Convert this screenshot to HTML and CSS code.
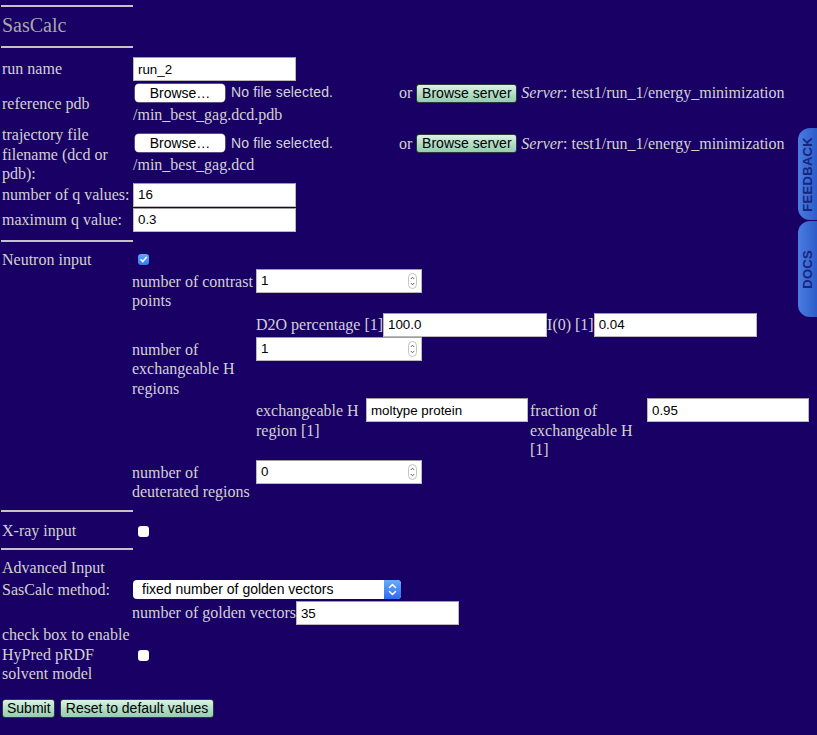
FILE: index.html
```html
<!DOCTYPE html>
<html lang="en">
<head>
<meta charset="utf-8">
<title>SasCalc</title>
<link rel="stylesheet" href="styles.css">
</head>
<body>
<div class="page">
  <div class="rule r1"></div>
  <div class="title">SasCalc</div>
  <div class="rule r2"></div>

  <div class="row row-run">
    <div class="lbl">run name</div>
    <div class="cell"><input class="txt" type="text" value="run_2"></div>
  </div>

  <div class="row row-ref">
    <div class="lbl">reference pdb</div>
    <div class="cell">
      <div class="fileline">
        <span class="filewidget"><button class="btn-white">Browse…</button><span class="nofile">No file selected.</span></span>
        <span class="or">or</span>
        <button class="btn-green">Browse server</button>
        <span class="server"><i>Server</i>: test1/run_1/energy_minimization</span>
      </div>
      <div class="path">/min_best_gag.dcd.pdb</div>
    </div>
  </div>

  <div class="row row-traj">
    <div class="lbl">trajectory file filename (dcd or pdb):</div>
    <div class="cell">
      <div class="fileline">
        <span class="filewidget"><button class="btn-white">Browse…</button><span class="nofile">No file selected.</span></span>
        <span class="or">or</span>
        <button class="btn-green">Browse server</button>
        <span class="server"><i>Server</i>: test1/run_1/energy_minimization</span>
      </div>
      <div class="path">/min_best_gag.dcd</div>
    </div>
  </div>

  <div class="row row-q">
    <div class="lbl">number of q values:</div>
    <div class="cell"><input class="txt" type="text" value="16"></div>
  </div>

  <div class="row row-maxq">
    <div class="lbl">maximum q value:</div>
    <div class="cell"><input class="txt" type="text" value="0.3"></div>
  </div>

  <div class="rule r3"></div>

  <div class="row row-neutron">
    <div class="lbl">Neutron input</div>
    <div class="cell">
      <div class="cbline"><span class="cb on"><svg viewBox="0 0 11 11" width="11" height="11"><path d="M3 5.8 L4.8 7.6 L8.2 3.4" fill="none" stroke="#fff" stroke-width="1.6" stroke-linecap="round" stroke-linejoin="round"/></svg></span></div>
      <div class="nested">
        <div class="nlbl">number of contrast points</div>
        <div class="numbox"><input type="text" value="1"><svg class="spin" viewBox="0 0 9 16" width="9" height="16"><rect x="0.5" y="0.5" width="8" height="15" rx="4" fill="#fff" stroke="#c4c4c4"/><path d="M2.8 6 L4.5 4.2 L6.2 6 M2.8 10 L4.5 11.8 L6.2 10" fill="none" stroke="#555" stroke-width="0.9"/></svg></div>

        <div class="inline">
          <span class="ilbl">D2O percentage [1]</span><input class="txt w164" type="text" value="100.0"><span class="ilbl">I(0) [1]</span><input class="txt" type="text" value="0.04">
        </div>

        <div class="nlbl">number of exchangeable H regions</div>
        <div class="numbox"><input type="text" value="1"><svg class="spin" viewBox="0 0 9 16" width="9" height="16"><rect x="0.5" y="0.5" width="8" height="15" rx="4" fill="#fff" stroke="#c4c4c4"/><path d="M2.8 6 L4.5 4.2 L6.2 6 M2.8 10 L4.5 11.8 L6.2 10" fill="none" stroke="#555" stroke-width="0.9"/></svg></div>

        <div class="subrow">
          <div class="slbl">exchangeable H region [1]</div>
          <input class="txt w162" type="text" value="moltype protein">
          <div class="slbl">fraction of exchangeable H [1]</div>
          <input class="txt w162" type="text" value="0.95">
        </div>

        <div class="nlbl">number of deuterated regions</div>
        <div class="numbox"><input type="text" value="0"><svg class="spin" viewBox="0 0 9 16" width="9" height="16"><rect x="0.5" y="0.5" width="8" height="15" rx="4" fill="#fff" stroke="#c4c4c4"/><path d="M2.8 6 L4.5 4.2 L6.2 6 M2.8 10 L4.5 11.8 L6.2 10" fill="none" stroke="#555" stroke-width="0.9"/></svg></div>
      </div>
    </div>
  </div>

  <div class="rule r4"></div>

  <div class="row row-xray">
    <div class="lbl">X-ray input</div>
    <div class="cell"><span class="cb"></span></div>
  </div>

  <div class="rule r5"></div>

  <div class="adv">Advanced Input</div>

  <div class="row row-method">
    <div class="lbl">SasCalc method:</div>
    <div class="cell">
      <div class="select"><span class="seltext">fixed number of golden vectors</span><span class="selarrow"><svg viewBox="0 0 17 19" width="17" height="19"><path d="M5.5 7.5 L8.5 4.5 L11.5 7.5 M5.5 11.5 L8.5 14.5 L11.5 11.5" fill="none" stroke="#fff" stroke-width="1.5" stroke-linecap="round" stroke-linejoin="round"/></svg></span></div>
    </div>
  </div>

  <div class="row row-golden">
    <div class="cell golden"><span class="ilbl">number of golden vectors</span><input class="txt" type="text" value="35"></div>
  </div>

  <div class="row row-hypred">
    <div class="lbl">check box to enable HyPred pRDF solvent model</div>
    <div class="cell"><span class="cb"></span></div>
  </div>

  <div class="actions">
    <button class="btn-green btn-submit">Submit</button>
    <button class="btn-green btn-reset">Reset to default values</button>
  </div>

  <div class="sidetabs">
    <div class="tab tab-feedback"><span>FEEDBACK</span></div>
    <div class="tab tab-docs"><span>DOCS</span></div>
  </div>
</div>
</body>
</html>
```

FILE: styles.css
```css
html, body {
  margin: 0;
  padding: 0;
}
body {
  background: #190064;
  color: #d2d2d2;
  font-family: "Liberation Serif", "Times New Roman", serif;
  font-size: 16px;
  line-height: 19.5px;
  min-height: 735px;
  overflow: hidden;
}
.page {
  position: relative;
  padding-left: 2px;
  min-height: 735px;
}
.rule {
  width: 132px;
  margin-left: -1px;
  border-top: 2px solid #c4c4c4;
}
.r1 { margin-top: 5px; }
.r2 { margin-top: 9px; }
.r3 { margin-top: 8px; }
.r4 { margin-top: 8px; }
.r5 { margin-top: 8px; }
.title {
  font-size: 20px;
  line-height: 24px;
  color: #a8a8a8;
  margin-top: 6px;
}
.row {
  display: grid;
  grid-template-columns: 131px 1fr;
  align-items: center;
}
.row-run { margin-top: 9px; }
.row-ref { margin-top: 2px; }
.row-q { margin-top: -1px; }
.row-maxq { margin-top: 1px; }
.row-neutron { margin-top: 8px; align-items: start; }
.row-xray { margin-top: 9px; }
.row-method { margin-top: 2px; }
.row-golden { margin-top: 2px; }
.row-golden .cell { grid-column: 2; margin-left: -1px; }
.row-hypred { margin-top: 0; }

.txt {
  box-sizing: border-box;
  display: block;
  width: 163px;
  height: 24px;
  margin: 0;
  padding: 0 4px;
  border: 1px solid #b9b9b9;
  border-top-color: #9c9c9c;
  background: #fff;
  color: #000;
  font-family: "Liberation Sans", Arial, sans-serif;
  font-size: 13.33px;
  outline: none;
}
.w164 { width: 164px; }
.w162 { width: 162px; }

.fileline {
  display: flex;
  align-items: center;
  height: 20px;
  white-space: nowrap;
}
.filewidget {
  display: inline-flex;
  align-items: center;
  width: 262px;
  margin-left: 2px;
}
.btn-white {
  box-sizing: border-box;
  width: 90px;
  height: 18px;
  padding: 0;
  border: none;
  border-radius: 4px;
  background: #fff;
  box-shadow: 0 0 0 0.5px #9a9a9a;
  color: #000;
  font-family: "Liberation Sans", Arial, sans-serif;
  font-size: 14px;
  line-height: 18px;
}
.nofile {
  margin-left: 6px;
  font-family: "Liberation Sans", Arial, sans-serif;
  font-size: 14px;
  letter-spacing: 0.15px;
  color: #d4d4d4;
}
.or { margin-left: 2px; }
.btn-green {
  box-sizing: border-box;
  height: 19px;
  padding: 0 4px;
  border: 1px solid #2a3a3a;
  border-radius: 3px;
  background: linear-gradient(#dcf3e6, #b0dcc4 55%, #96cdb0);
  color: #000;
  font-family: "Liberation Sans", Arial, sans-serif;
  font-size: 14px;
  line-height: 17px;
  white-space: nowrap;
}
.fileline .btn-green {
  width: 101px;
  padding: 0;
  margin-left: 4px;
}
.server { margin-left: 4px; white-space: nowrap; }
.path {
  padding-top: 2px;
  line-height: 20px;
}

.cbline {
  display: flex;
  align-items: center;
  height: 19px;
}
.cb {
  display: inline-block;
  box-sizing: border-box;
  width: 11px;
  height: 11px;
  margin-left: 5px;
  border-radius: 3px;
  background: #fff;
  vertical-align: middle;
}
.cb svg { display: block; }
.cb.on {
  background: linear-gradient(#62a6fb, #2f7cf1);
}

.nested {
  display: grid;
  grid-template-columns: 122px auto;
  column-gap: 2px;
  align-items: start;
  justify-items: start;
  margin-left: -1px;
}
.nlbl {
  width: 122px;
  padding-top: 3px;
}
.numbox {
  box-sizing: border-box;
  display: flex;
  align-items: center;
  width: 166px;
  height: 24px;
  border: 1px solid #b9b9b9;
  border-top-color: #9c9c9c;
  background: #fff;
}
.numbox input {
  flex: 1;
  min-width: 0;
  border: none;
  outline: none;
  background: transparent;
  padding: 0 4px;
  margin: 0;
  color: #000;
  font-family: "Liberation Sans", Arial, sans-serif;
  font-size: 13.33px;
}
.numbox .spin {
  display: block;
  margin-right: 4px;
}
.inline {
  grid-column: 2;
  display: flex;
  align-items: center;
  margin-top: 2px;
}
.ilbl { white-space: nowrap; }
.subrow {
  grid-column: 2;
  display: grid;
  grid-template-columns: 108px 162px 115px 162px;
  column-gap: 2px;
  align-items: start;
}
.slbl { padding-top: 3px; }
.golden {
  display: flex;
  align-items: center;
}

.adv {
  margin-top: 8px;
}
.select {
  display: flex;
  width: 268px;
  height: 19px;
  border-radius: 4px;
  background: #fff;
  overflow: hidden;
}
.seltext {
  flex: 1;
  padding-left: 9px;
  color: #000;
  font-family: "Liberation Sans", Arial, sans-serif;
  font-size: 14px;
  line-height: 19px;
}
.selarrow {
  width: 17px;
  height: 19px;
  background: linear-gradient(#6aaafc, #2b6df2);
}
.selarrow svg { display: block; }

.actions {
  display: flex;
  gap: 5px;
  margin-top: 15px;
}
.btn-submit { width: 53px; }
.btn-reset { width: 154px; padding: 0 3px; }

.sidetabs {
  position: absolute;
  right: 0;
  top: 123px;
  width: 19px;
}
.tab {
  display: flex;
  align-items: center;
  justify-content: center;
  width: 19px;
  border-radius: 12px 0 0 12px;
  background: linear-gradient(to right, #4a7ce2, #2d5cc8);
  color: #18247e;
  font-family: "Liberation Sans", Arial, sans-serif;
  font-weight: bold;
  font-size: 13px;
  letter-spacing: 0.3px;
}
.tab span {
  writing-mode: vertical-rl;
  transform: rotate(180deg);
}
.tab-feedback { height: 92px; }
.tab-docs { height: 96px; margin-top: 1px; }
```
